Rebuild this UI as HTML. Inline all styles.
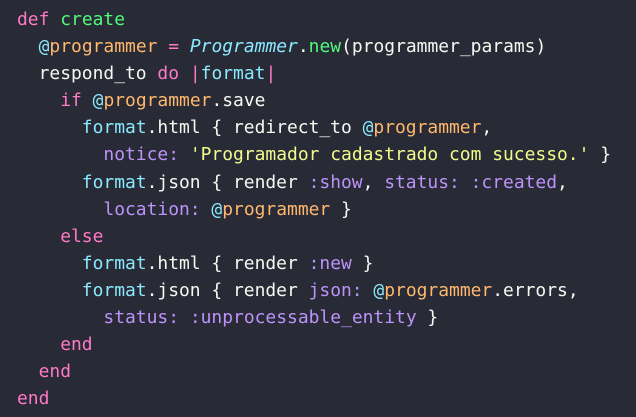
<html><head><style>
body{margin:0;background:#282a36;width:636px;height:417px;overflow:hidden}
pre{margin:0;padding:6px 0 0 17px;font-family:"DejaVu Sans Mono",monospace;font-size:17.95px;line-height:27.1px;color:#f8f8f2}
.k{color:#ff79c6}.g{color:#50fa7b}.o{color:#ffb86c}.c{color:#8be9fd}.p{color:#bd93f9}.y{color:#f1fa8c}.i{color:#8be9fd;font-style:italic}
</style></head><body><pre><span class="k">def</span> <span class="g">create</span>
  <span class="c">@</span><span class="o">programmer</span> <span class="k">=</span> <span class="i">Programmer</span>.<span class="g">new</span>(programmer_params)
  respond_to <span class="k">do</span> <span class="k">|</span><span class="c">format</span><span class="k">|</span>
    <span class="k">if</span> <span class="c">@</span><span class="o">programmer</span>.save
      <span class="c">format</span>.html { redirect_to <span class="c">@</span><span class="o">programmer</span>,
        <span class="p">notice:</span> <span class="y">'Programador cadastrado com sucesso.'</span> }
      <span class="c">format</span>.json { render <span class="p">:show</span>, <span class="p">status:</span> <span class="p">:created</span>,
        <span class="p">location:</span> <span class="c">@</span><span class="o">programmer</span> }
    <span class="k">else</span>
      <span class="c">format</span>.html { render <span class="p">:new</span> }
      <span class="c">format</span>.json { render <span class="p">json:</span> <span class="c">@</span><span class="o">programmer</span>.errors,
        <span class="p">status:</span> <span class="p">:unprocessable_entity</span> }
    <span class="k">end</span>
  <span class="k">end</span>
<span class="k">end</span></pre></body></html>
